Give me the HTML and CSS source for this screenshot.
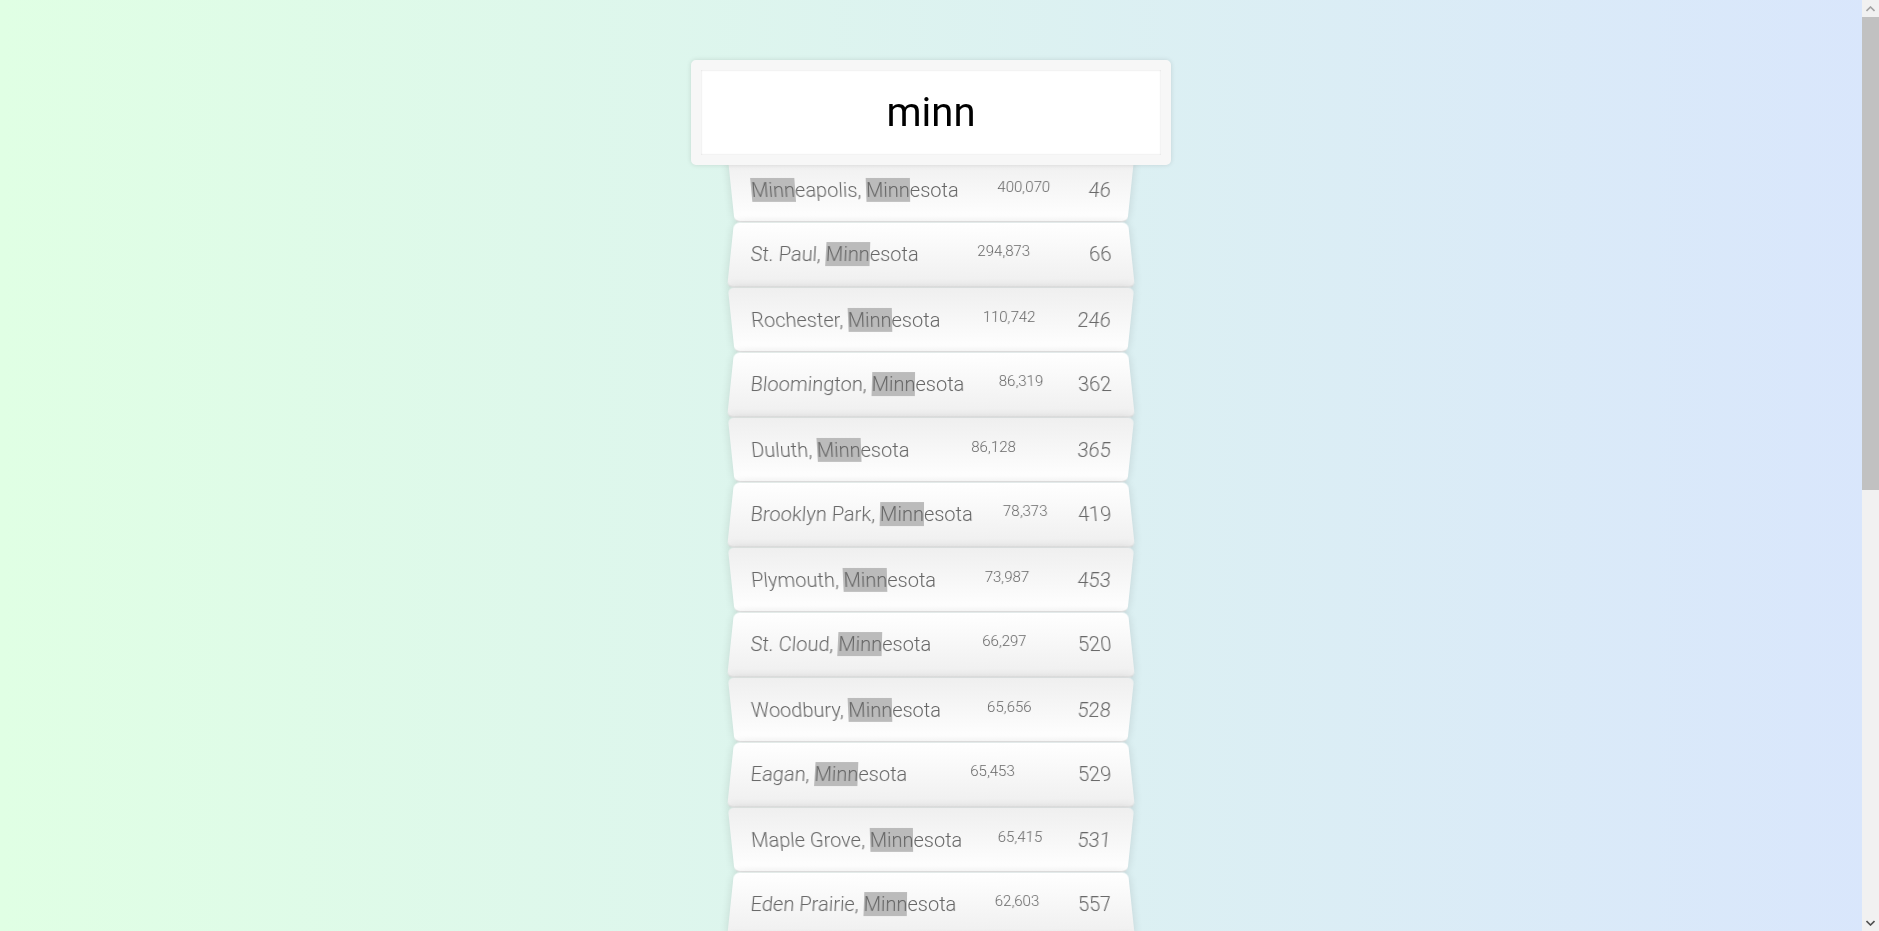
FILE: index.html
```html
<!DOCTYPE html>
<html lang="en">
<head>
<meta charset="UTF-8">
<title>Type Ahead</title>
<link rel="stylesheet" href="styles.css">
</head>
<body>
<form class="search-form">
  <input type="text" class="search" placeholder="City or State" value="minn">
  <ul class="suggestions">
    <li><span class="name"><span class="hl">Minn</span>eapolis, <span class="hl">Minn</span>esota</span><span class="population">400,070</span><span class="rank">46</span></li>
    <li><span class="name">St. Paul, <span class="hl">Minn</span>esota</span><span class="population">294,873</span><span class="rank">66</span></li>
    <li><span class="name">Rochester, <span class="hl">Minn</span>esota</span><span class="population">110,742</span><span class="rank">246</span></li>
    <li><span class="name">Bloomington, <span class="hl">Minn</span>esota</span><span class="population">86,319</span><span class="rank">362</span></li>
    <li><span class="name">Duluth, <span class="hl">Minn</span>esota</span><span class="population">86,128</span><span class="rank">365</span></li>
    <li><span class="name">Brooklyn Park, <span class="hl">Minn</span>esota</span><span class="population">78,373</span><span class="rank">419</span></li>
    <li><span class="name">Plymouth, <span class="hl">Minn</span>esota</span><span class="population">73,987</span><span class="rank">453</span></li>
    <li><span class="name">St. Cloud, <span class="hl">Minn</span>esota</span><span class="population">66,297</span><span class="rank">520</span></li>
    <li><span class="name">Woodbury, <span class="hl">Minn</span>esota</span><span class="population">65,656</span><span class="rank">528</span></li>
    <li><span class="name">Eagan, <span class="hl">Minn</span>esota</span><span class="population">65,453</span><span class="rank">529</span></li>
    <li><span class="name">Maple Grove, <span class="hl">Minn</span>esota</span><span class="population">65,415</span><span class="rank">531</span></li>
    <li><span class="name">Eden Prairie, <span class="hl">Minn</span>esota</span><span class="population">62,603</span><span class="rank">557</span></li>
    <li><span class="name">Coon Rapids, <span class="hl">Minn</span>esota</span><span class="population">62,103</span><span class="rank">563</span></li>
    <li><span class="name">Burnsville, <span class="hl">Minn</span>esota</span><span class="population">61,434</span><span class="rank">573</span></li>
    <li><span class="name">Blaine, <span class="hl">Minn</span>esota</span><span class="population">60,407</span><span class="rank">591</span></li>
    <li><span class="name">Lakeville, <span class="hl">Minn</span>esota</span><span class="population">58,562</span><span class="rank">622</span></li>
    <li><span class="name"><span class="hl">Minn</span>etonka, <span class="hl">Minn</span>esota</span><span class="population">51,368</span><span class="rank">707</span></li>
    <li><span class="name">Apple Valley, <span class="hl">Minn</span>esota</span><span class="population">50,201</span><span class="rank">727</span></li>
    <li><span class="name">Edina, <span class="hl">Minn</span>esota</span><span class="population">49,376</span><span class="rank">742</span></li>
    <li><span class="name">St. Louis Park, <span class="hl">Minn</span>esota</span><span class="population">47,411</span><span class="rank">768</span></li>
    <li><span class="name">Mankato, <span class="hl">Minn</span>esota</span><span class="population">40,641</span><span class="rank">853</span></li>
    <li><span class="name">Maplewood, <span class="hl">Minn</span>esota</span><span class="population">39,765</span><span class="rank">893</span></li>
    <li><span class="name">Moorhead, <span class="hl">Minn</span>esota</span><span class="population">39,398</span><span class="rank">906</span></li>
    <li><span class="name">Shakopee, <span class="hl">Minn</span>esota</span><span class="population">39,167</span><span class="rank">921</span></li>
  </ul>
</form>
<div class="scrollbar" aria-hidden="true">
  <div class="sb-btn sb-up">
    <svg width="9" height="6" viewBox="0 0 9 6"><path d="M0.5 5 L4.5 1 L8.5 5" fill="none" stroke="#a3a3a3" stroke-width="1.6"/></svg>
  </div>
  <div class="sb-track"><div class="sb-thumb"></div></div>
  <div class="sb-btn sb-down">
    <svg width="9" height="6" viewBox="0 0 9 6"><path d="M0.5 1 L4.5 5 L8.5 1" fill="none" stroke="#505050" stroke-width="1.6"/></svg>
  </div>
</div>
</body>
</html>
```

FILE: styles.css
```css
*, *::before, *::after {
  box-sizing: border-box;
}

html {
  background: linear-gradient(to right, #e0ffe4 0%, #d9e6fc 100%);
  font-family: Roboto, "Liberation Sans", sans-serif;
  font-size: 20px;
  font-weight: 300;
  color: #666;
}

body {
  margin: 0;
  padding: 1px 17px 0 0;
}

.search-form {
  max-width: 400px;
  margin: 49px auto 50px;
}

input.search {
  display: block;
  width: 120%;
  height: 105px;
  margin: 0;
  padding: 20px;
  position: relative;
  left: -10%;
  top: 10px;
  z-index: 2;
  text-align: center;
  outline: 0;
  border: 10px solid #f7f7f7;
  border-radius: 5px;
  background: #fff;
  font-family: Roboto, "Liberation Sans", sans-serif;
  font-weight: 400;
  font-size: 40px;
  line-height: 45px;
  color: #000;
  box-shadow: 0 0 5px rgba(0, 0, 0, 0.12), inset 0 0 2px rgba(0, 0, 0, 0.19);
}

.suggestions {
  margin: 0;
  padding: 0;
  position: relative;
}

.suggestions li {
  list-style: none;
  background: #fff;
  border-bottom: 1px solid #d8d8d8;
  border-radius: 6px;
  box-shadow: 0 0 10px rgba(0, 0, 0, 0.12);
  margin: 0;
  padding: 20px;
  display: flex;
  justify-content: space-between;
  text-transform: capitalize;
}

.suggestions li:nth-child(even) {
  transform: perspective(100px) rotateX(3deg) translateY(2px) scale(1.001);
  background: linear-gradient(to bottom, #ffffff 0%, #efefef 100%);
}

.suggestions li:nth-child(odd) {
  transform: perspective(100px) rotateX(-3deg) translateY(3px);
  background: linear-gradient(to top, #ffffff 0%, #efefef 100%);
}

.population {
  font-size: 15px;
}

.hl {
  background: #bbbbbb;
}

/* simulated browser scrollbar (overlays the right edge) */
.scrollbar {
  position: fixed;
  top: 0;
  right: 0;
  bottom: 0;
  width: 17px;
  background: #f1f1f1;
  display: flex;
  flex-direction: column;
  z-index: 10;
}

.sb-btn {
  height: 17px;
  flex: none;
  display: flex;
  align-items: center;
  justify-content: center;
}

.sb-track {
  flex: 1;
  padding: 0 2px;
}

.sb-thumb {
  height: 473px;
  background: #c1c1c1;
  margin: 0 -2px;
}
```
